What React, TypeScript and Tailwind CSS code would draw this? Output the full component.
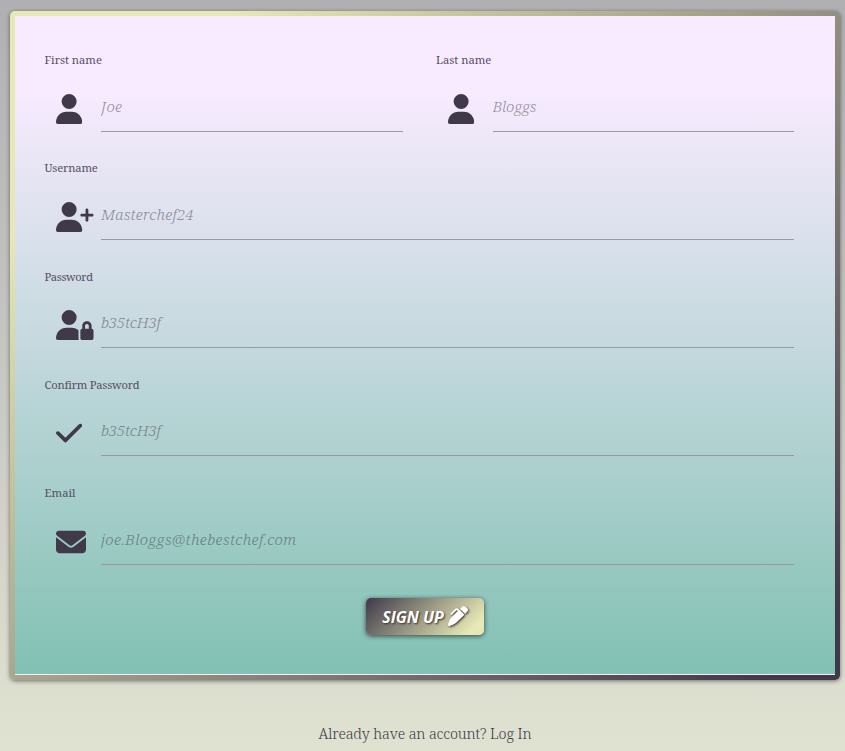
import type { ReactNode } from "react";
import { FaUser, FaUserPlus, FaUserLock, FaCheck, FaEnvelope, FaPenClip } from "react-icons/fa6";

const serif = "font-['Noto_Serif','DejaVu_Serif_Condensed','DejaVu_Serif',serif] [font-stretch:condensed]";

type FieldProps = {
  label: string;
  placeholder: string;
  icon: ReactNode;
  labelSpacing: string;
  inputSpacing: string;
};

function Field({ label, placeholder, icon, labelSpacing, inputSpacing }: FieldProps) {
  return (
    <div className="h-[108.2px] min-w-0 flex-1">
      <label className={`block h-[30px] pl-[0.5px] text-[11.2px] leading-[24px] whitespace-nowrap text-[#564f66] ${labelSpacing}`}>
        {label}
      </label>
      <div className="flex h-[54px]">
        <div className="w-[57px] shrink-0 pt-[16px] pl-[12px] text-[30px] text-[#3f394a]">{icon}</div>
        <input
          placeholder={placeholder}
          className={`h-[54px] min-w-0 flex-1 border-b border-[#9e979e] bg-transparent pt-[3px] text-[15.2px] font-light italic outline-none placeholder:text-[#3f394a]/55 ${inputSpacing}`}
        />
      </div>
    </div>
  );
}

export default function App() {
  return (
    <div className={`h-[751px] overflow-hidden bg-linear-to-b from-[#b0b0b3] to-[#e0e2d1] px-[10px] pt-[11px] pr-[5px] ${serif}`}>
      <div className="h-[669px] rounded-[5px] bg-[linear-gradient(135deg,#e6e8b5_15%,#3f394a_95%)] p-[5px] pb-[5px] shadow-[0_1px_4px_rgba(0,0,0,0.5)]">
        <form className="h-[659px] border-b border-[#f8ebff] bg-[linear-gradient(180deg,#f8ebff_11%,#82c1b3_100%)] pt-[31.85px] pr-[41px] pl-[29px]">
          <div className="flex gap-[33px]">
            <Field label="First name" placeholder="Joe" icon={<FaUser className="w-[26.25px]" />} labelSpacing="tracking-[0px]" inputSpacing="tracking-[0.3px]" />
            <Field label="Last name" placeholder="Bloggs" icon={<FaUser className="w-[26.25px]" />} labelSpacing="tracking-[0px]" inputSpacing="tracking-[-0.2px]" />
          </div>
          <Field label="Username" placeholder="Masterchef24" icon={<FaUserPlus className="w-[37.5px]" />} labelSpacing="tracking-[-0.15px]" inputSpacing="tracking-[0.2px]" />
          <Field label="Password" placeholder="b35tcH3f" icon={<FaUserLock className="w-[37.5px]" />} labelSpacing="tracking-[-0.4px] pt-[1px]" inputSpacing="tracking-[-0.15px]" />
          <Field label="Confirm Password" placeholder="b35tcH3f" icon={<FaCheck className="w-[26.25px]" />} labelSpacing="tracking-[-0.22px] pt-[0.5px]" inputSpacing="tracking-[-0.15px]" />
          <Field label="Email" placeholder="joe.Bloggs@thebestchef.com" icon={<FaEnvelope />} labelSpacing="tracking-[0.05px]" inputSpacing="tracking-[0.33px]" />
          <div className="flex justify-center pt-[9.15px] pl-[12px]">
            <button type="button" className="flex h-[37px] w-[118px] items-center justify-center gap-[4px] rounded-[5px] bg-[linear-gradient(135deg,#3f394a,#e6e8b5_88%)] text-white shadow-[0_1px_5px_rgba(0,0,0,0.65)]">
              <span className="pt-[1px] font-['Open_Sans',sans-serif] text-[16px] font-bold tracking-[0px] whitespace-nowrap italic [font-stretch:normal] [text-shadow:1px_1px_2px_#3a302d]">SIGN UP</span>
              <FaPenClip className="text-[20px] [filter:drop-shadow(1px_1px_1px_#3a302d)]" />
            </button>
          </div>
        </form>
      </div>
      <p className="mt-[42px] text-center text-[14.4px] leading-6 font-light tracking-[-0.12px] whitespace-nowrap text-[#3f394a]">
        Already have an account? <a>Log In</a>
      </p>
    </div>
  );
}
